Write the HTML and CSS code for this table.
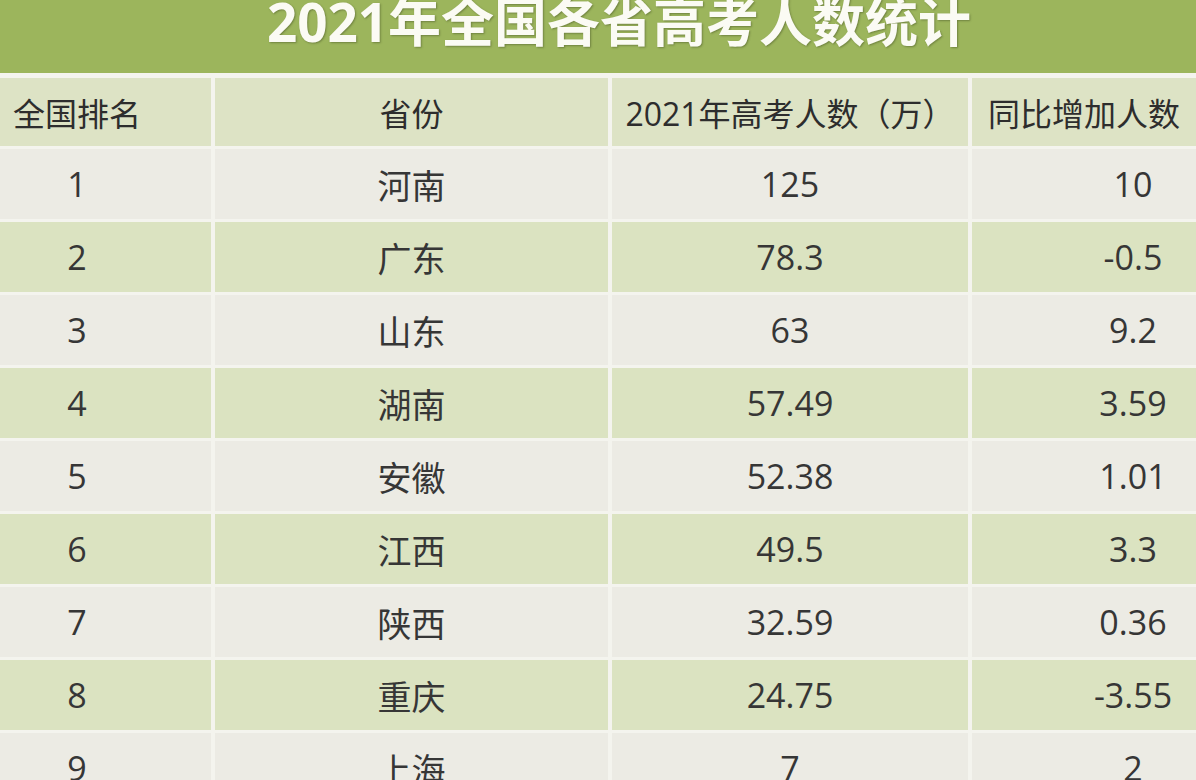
FILE: index.html
```html
<!DOCTYPE html>
<html lang="zh-CN">
<head>
<meta charset="utf-8">
<title>2021年全国各省高考人数统计</title>
<link rel="stylesheet" href="styles.css">
</head>
<body>
<div class="page">
  <div class="title-bar"><h1 class="title">2021年全国各省高考人数统计</h1></div>
  <div class="table">
    <div class="row head">
      <div class="cell c1">全国排名</div>
      <div class="cell c2">省份</div>
      <div class="cell c3">2021年高考人数（万）</div>
      <div class="cell c4h">同比增加人数</div>
    </div>
    <div class="row light">
      <div class="cell c1">1</div><div class="cell c2">河南</div><div class="cell c3">125</div><div class="cell c4">10</div>
    </div>
    <div class="row green">
      <div class="cell c1">2</div><div class="cell c2">广东</div><div class="cell c3">78.3</div><div class="cell c4">-0.5</div>
    </div>
    <div class="row light">
      <div class="cell c1">3</div><div class="cell c2">山东</div><div class="cell c3">63</div><div class="cell c4">9.2</div>
    </div>
    <div class="row green">
      <div class="cell c1">4</div><div class="cell c2">湖南</div><div class="cell c3">57.49</div><div class="cell c4">3.59</div>
    </div>
    <div class="row light">
      <div class="cell c1">5</div><div class="cell c2">安徽</div><div class="cell c3">52.38</div><div class="cell c4">1.01</div>
    </div>
    <div class="row green">
      <div class="cell c1">6</div><div class="cell c2">江西</div><div class="cell c3">49.5</div><div class="cell c4">3.3</div>
    </div>
    <div class="row light">
      <div class="cell c1">7</div><div class="cell c2">陕西</div><div class="cell c3">32.59</div><div class="cell c4">0.36</div>
    </div>
    <div class="row green">
      <div class="cell c1">8</div><div class="cell c2">重庆</div><div class="cell c3">24.75</div><div class="cell c4">-3.55</div>
    </div>
    <div class="row light">
      <div class="cell c1">9</div><div class="cell c2">上海</div><div class="cell c3">7</div><div class="cell c4">2</div>
    </div>
  </div>
</div>
</body>
</html>
```
FILE: styles.css
```css
html, body {
  margin: 0;
  padding: 0;
  height: 100%;
  overflow: hidden;
  background: #f4f4ee;
}
body {
  font-family: "Open Sans", "Noto Sans CJK SC", sans-serif;
  color: #363636;
}
.page {
  width: 1196px;
  height: 780px;
  overflow: hidden;
  background: #f4f4ee;
}
.title-bar {
  height: 73px;
  background: #9cb55c;
  overflow: hidden;
}
.title {
  margin: 0;
  padding-left: 42px;
  font-size: 53px;
  font-weight: 700;
  line-height: 44px;
  color: #fbfbf4;
  text-align: center;
  text-shadow: 1px 1px 2px rgba(60, 70, 30, 0.45);
}
.table {
  margin-top: 5px;
  display: flex;
  flex-direction: column;
  gap: 3px;
}
.row {
  display: grid;
  grid-template-columns: 211px 393px 356px 224px;
  column-gap: 4px;
  height: 70px;
}
.row.head {
  height: 68px;
}
.cell {
  display: flex;
  align-items: center;
  justify-content: center;
  font-size: 34px;
  white-space: nowrap;
}
.head .cell {
  background: #dde3c5;
  font-size: 32px;
  color: #2d2d2d;
}
.light .cell {
  background: #ecebe4;
}
.green .cell {
  background: #dbe3c1;
}
.c1 {
  padding-right: 57px;
}
.c4 {
  padding-left: 98px;
}
```
